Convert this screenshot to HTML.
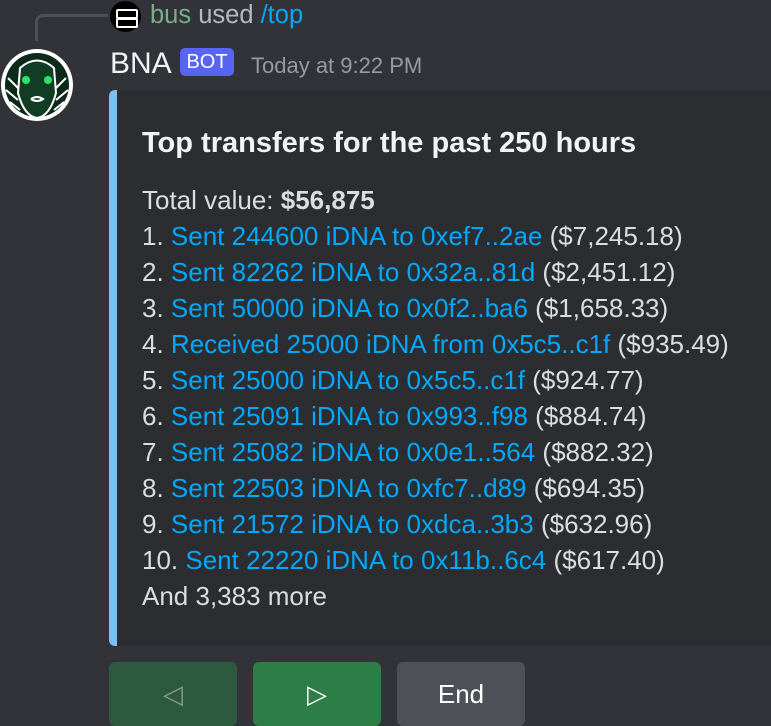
<!DOCTYPE html>
<html><head><meta charset="utf-8"><style>
body{margin:0;width:771px;height:726px;background:#313338;overflow:hidden;font-family:"Liberation Sans",sans-serif;position:relative}
.a{position:absolute}
.ln{color:#00a8fc}
.e div{height:36px;line-height:36px;white-space:nowrap}
.btn{position:absolute;top:662px;width:128px;height:64px;border-radius:6px;display:flex;align-items:center;justify-content:center;font-size:26px}
</style></head><body>
<div class="a" style="left:35px;top:14px;width:70px;height:24px;border-left:3px solid #4e5058;border-top:3px solid #4e5058;border-top-left-radius:8px"></div>
<div class="a" style="left:110px;top:1px;width:31px;height:31px;border-radius:50%;background:#000"><div class="a" style="left:6px;top:8px;width:18px;height:6px;border:2px solid #fff;border-radius:2px"></div><div class="a" style="left:6px;top:17px;width:18px;height:6px;border:2px solid #fff;border-radius:2px"></div></div>
<div class="a" style="left:150px;top:1px;font-size:25.5px;color:#b5bac1"><span style="color:#7aae8a">bus</span> used <span style="color:#00a8fc">/top</span></div>
<svg class="a" style="left:0;top:48px" width="75" height="75" viewBox="0 0 75 75"><circle cx="37" cy="37" r="36" fill="#fff"/><circle cx="37" cy="37" r="32" fill="#0b2a1a"/><path d="M20 20 Q37 5 54 20 L56 45 Q50 68 37 70 Q24 68 18 45Z" fill="#123d25" stroke="#fff" stroke-width="2"/><circle cx="26" cy="32" r="4" fill="#2be36a"/><circle cx="48" cy="32" r="4" fill="#2be36a"/><path d="M31 51 Q37 47 43 51 Q37 55 31 51" fill="none" stroke="#fff" stroke-width="2"/><path d="M8 30 L18 40 M6 42 L18 52 M10 54 L20 62 M66 30 L56 40 M68 42 L56 52 M64 54 L54 62" stroke="#fff" stroke-width="2"/></svg>
<div class="a" style="left:110px;top:47px;font-size:30px;color:#f2f3f5">BNA</div>
<div class="a" style="left:180px;top:48px;width:54px;height:28px;background:#5865f2;border-radius:5px;color:#fff;font-size:20px;line-height:28px;text-align:center">BOT</div>
<div class="a" style="left:251px;top:53px;font-size:22px;color:#949ba4">Today at 9:22 PM</div>
<div class="a" style="left:109px;top:90px;width:680px;height:556px;background:#2b2d31;border-radius:6px;border-left:8px solid #7ebff0;box-sizing:border-box"></div>
<div class="a" style="left:142px;top:127px;font-size:29px;font-weight:bold;color:#f2f3f5;white-space:nowrap">Top transfers for the past 250 hours</div>
<div class="a e" style="left:142px;top:182px;font-size:26px;color:#dbdee1">
<div>Total value: <b>$56,875</b></div>
<div>1. <span class="ln">Sent 244600 iDNA to 0xef7..2ae</span> ($7,245.18)</div>
<div>2. <span class="ln">Sent 82262 iDNA to 0x32a..81d</span> ($2,451.12)</div>
<div>3. <span class="ln">Sent 50000 iDNA to 0x0f2..ba6</span> ($1,658.33)</div>
<div>4. <span class="ln">Received 25000 iDNA from 0x5c5..c1f</span> ($935.49)</div>
<div>5. <span class="ln">Sent 25000 iDNA to 0x5c5..c1f</span> ($924.77)</div>
<div>6. <span class="ln">Sent 25091 iDNA to 0x993..f98</span> ($884.74)</div>
<div>7. <span class="ln">Sent 25082 iDNA to 0x0e1..564</span> ($882.32)</div>
<div>8. <span class="ln">Sent 22503 iDNA to 0xfc7..d89</span> ($694.35)</div>
<div>9. <span class="ln">Sent 21572 iDNA to 0xdca..3b3</span> ($632.96)</div>
<div>10. <span class="ln">Sent 22220 iDNA to 0x11b..6c4</span> ($617.40)</div>
<div>And 3,383 more</div>
</div>
<div class="btn" style="left:109px;background:#2d5a3f;color:#8a9a90">◁</div>
<div class="btn" style="left:253px;background:#2d7d46;color:#fff">▷</div>
<div class="btn" style="left:397px;background:#4e5058;color:#fff">End</div>
</body></html>
